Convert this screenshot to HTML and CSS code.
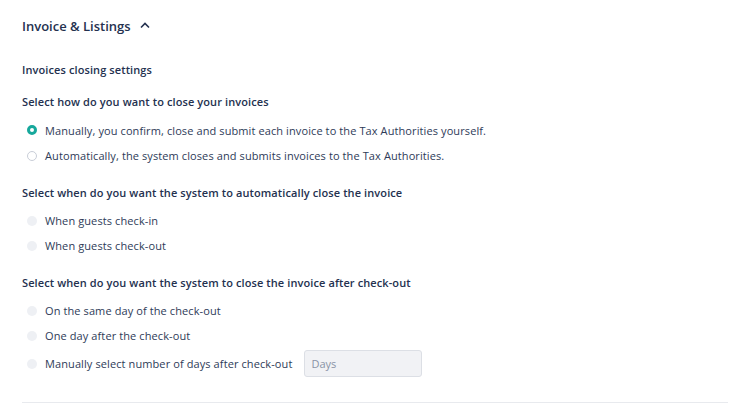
FILE: index.html
```html
<!DOCTYPE html>
<html>
<head>
<title>Invoice &amp; Listings</title>
<link rel="stylesheet" href="styles.css">
</head>
<body>
<div class="panel">
 <h2 class="title">Invoice &amp; Listings
  <svg class="chev" width="10" height="7" viewBox="0 0 10 7"><path d="M1 5.5 L5 1.5 L9 5.5" fill="none" stroke="#24314f" stroke-width="1.6"/></svg>
 </h2>

 <h3 class="sub">Invoices closing settings</h3>

 <div class="group">
  <div class="label">Select how do you want to close your invoices</div>
  <div class="opt first"><span class="radio on"></span>Manually, you confirm, close and submit each invoice to the Tax Authorities yourself.</div>
  <div class="opt"><span class="radio"></span>Automatically, the system closes and submits invoices to the Tax Authorities.</div>
 </div>

 <div class="group">
  <div class="label">Select when do you want the system to automatically close the invoice</div>
  <div class="opt"><span class="radio off"></span>When guests check-in</div>
  <div class="opt"><span class="radio off"></span>When guests check-out</div>
 </div>

 <div class="group">
  <div class="label">Select when do you want the system to close the invoice after check-out</div>
  <div class="opt"><span class="radio off"></span>On the same day of the check-out</div>
  <div class="opt"><span class="radio off"></span>One day after the check-out</div>
  <div class="opt tall"><span class="radio off"></span>Manually select number of days after check-out <span class="days">Days</span></div>
 </div>

 <div class="rule"></div>
</div>
</body>
</html>
```

FILE: styles.css
```css
body {
 margin:0;
 background:#fff;
 font-family:"Open Sans", "Noto Sans", sans-serif;
 color:#24314f;
}
.panel {
 padding:16px 22px 0 22px;
}
.title {
 margin:0;
 font-size:13px;
 font-weight:600;
 height:20px;
 display:flex;
 align-items:center;
 gap:9px;
}
.chev {margin-top:-1px;}
.sub {
 margin:26px 0 0 0;
 font-size:11px;
 line-height:15px;
 font-weight:600;
 letter-spacing:0.1px;
}
.group {margin-top:18px;}
.label {
 font-size:11px;
 font-weight:600;
 line-height:14px;
 margin-bottom:8px;
 letter-spacing:0.1px;
}
.opt {
 display:flex;
 align-items:center;
 height:25px;
 font-size:11px;
 letter-spacing:0.1px;
 color:#2e3b58;
 padding-left:5px;
}
.opt.first {height:26px;}
.opt.tall {height:31px;}
.radio {
 width:10px;
 height:10px;
 border-radius:50%;
 box-sizing:border-box;
 border:1px solid #c9ced8;
 background:#fff;
 margin-right:8px;
 flex:none;
}
.radio.on {
 border:3px solid #17a89c;
 background:#fff;
}
.radio.off {
 border:none;
 background:#eef0f4;
}
.days {
 display:inline-flex;
 align-items:center;
 box-sizing:border-box;
 width:118px;
 height:27px;
 margin-left:12px;
 padding-left:6px;
 background:#f1f2f5;
 border:1px solid #dcdfe5;
 border-radius:3px;
 color:#8a93a6;
 font-size:11px;
 letter-spacing:0;
}
.rule {
 margin-top:23px;
 height:1px;
 background:#e8eaee;
}
```
